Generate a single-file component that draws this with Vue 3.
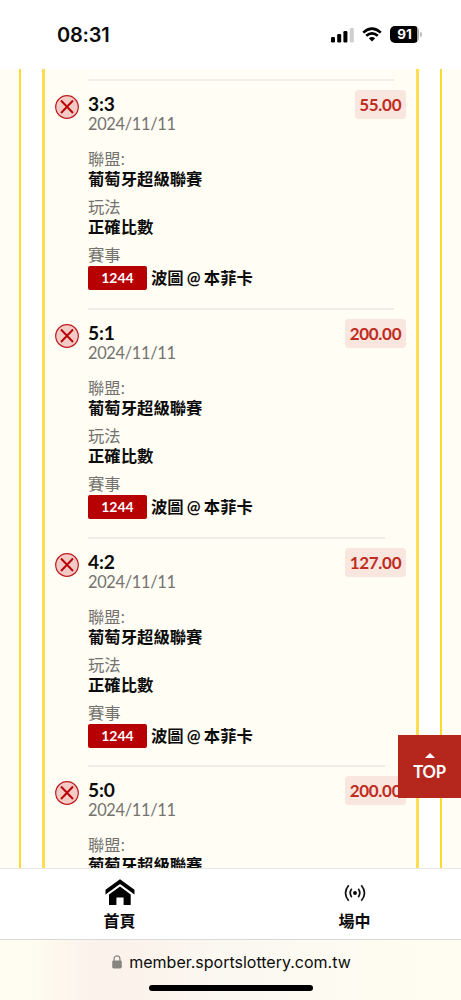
<script setup>
import { ref } from "vue"

const bets = ref([
  { score: "3:3", odds: "55.00" },
  { score: "5:1", odds: "200.00" },
  { score: "4:2", odds: "127.00", short: true },
  { score: "5:0", odds: "200.00", short: true }
])

const date = "2024/11/11"
const league = "葡萄牙超級聯賽"
const play = "正確比數"
const matchNo = "1244"
const match = "波圖 @ 本菲卡"

function toTop(){
  window.scrollTo(0, 0)
}
</script>


<template>

<div class="phone">

<header class="status">
<span class="clock">08:31</span>
<svg class="signal" viewBox="0 0 24 16">
<rect x="0" y="10" width="4" height="5.5" rx="1.2" />
<rect x="6.2" y="7" width="4" height="8.5" rx="1.2" />
<rect x="12.4" y="4" width="4" height="11.5" rx="1.2" />
<rect x="18.8" y="1" width="4" height="14.5" rx="1.2" fill="#cfcfcf" />
</svg>
<svg class="wifi" viewBox="0 0 20 15">
<path d="M1.2 5.6Q10-2.2 18.8 5.6" />
<path d="M4.2 8.8Q10 3.8 15.8 8.8" />
<path class="dot" d="M6.8 11.2Q10 8.6 13.2 11.2L10 14.4Z" />
</svg>
<span class="battery"><b>91</b></span>
<span class="battery-tip"></span>
</header>

<main class="page">
<div class="outer">
<div class="card">

<section v-for="(bet, i) in bets" :key="i" class="bet">
<div class="line" :class="{ short: bet.short }"></div>
<div class="row">
<svg class="lose" viewBox="0 0 24 24">
<circle cx="12" cy="12" r="11.3" />
<path d="M6 5.5L18 18M18 5.5L6 18" />
</svg>
<div class="info">
<div class="score">{{ bet.score }}</div>
<div class="date">{{ date }}</div>
<div class="label first">聯盟:</div>
<div class="value">{{ league }}</div>
<div class="label">玩法</div>
<div class="value">{{ play }}</div>
<div class="label">賽事</div>
<div class="match">
<span class="no">{{ matchNo }}</span>
<span class="teams">{{ match }}</span>
</div>
</div>
<div class="odds">{{ bet.odds }}</div>
</div>
</section>

</div>
</div>
</main>

<button class="top" @click="toTop">
<span class="arrow"></span>
TOP
</button>

<nav class="tabs">
<a class="tab">
<svg class="home" viewBox="0 0 30 27">
<path d="M15 .3L29.5 10.8V15.4L15 4.9L.5 15.4V10.8Z" />
<path d="M15 7.4L25.7 15.4V26H18.6V18.5H11.4V26H4V15.4Z" />
</svg>
<span>首頁</span>
</a>
<a class="tab">
<svg class="live" viewBox="0 0 22 18">
<circle cx="11" cy="9" r="1.9" />
<path d="M7.7 4.8Q4.7 9 7.7 13.2M14.3 4.8Q17.3 9 14.3 13.2M4.7 1.2Q-1.7 9 4.7 16.8M17.3 1.2Q23.7 9 17.3 16.8" />
</svg>
<span>場中</span>
</a>
</nav>

<footer class="browser">
<div class="address">
<svg class="lock" viewBox="0 0 10 14">
<rect x="0.2" y="5.6" width="9.6" height="7.9" rx="1.4" />
<path d="M2.1 6V3.7a2.9 2.9 0 0 1 5.8 0V6" />
</svg>
<span>member.sportslottery.com.tw</span>
</div>
<div class="bar"></div>
</footer>

</div>

</template>


<style>
body{
margin:0;
overflow:hidden;
}
</style>

<style scoped>

.phone{
position:relative;
width:461px;
height:1000px;
display:flex;
flex-direction:column;
overflow:hidden;
background:#fff;
font-family:Lato,"Noto Sans CJK TC",sans-serif;
color:#0c0c0c;
}

.status{
height:69px;
flex:none;
box-sizing:border-box;
padding-left:57px;
display:flex;
align-items:center;
font-family:Inter,sans-serif;
}

.clock{
width:274px;
font-size:20px;
font-weight:600;
letter-spacing:-0.2px;
}

.signal{
width:24px;
height:16px;
margin-right:7px;
}

.wifi{
width:20px;
height:15px;
margin-right:8px;
fill:none;
stroke:#000;
stroke-width:2.6;
}

.wifi .dot{
fill:#000;
stroke:none;
}

.battery{
width:29px;
height:17px;
border-radius:5px;
background:linear-gradient(90deg,#000 27px,#aaa 27px);
color:#fff;
font-size:13.5px;
line-height:17px;
text-align:center;
}

.battery-tip{
width:2px;
height:5px;
margin-left:1px;
border-radius:0 2px 2px 0;
background:#bbb;
}

.page{
height:799px;
flex:none;
overflow:hidden;
display:flex;
background:#fffdf4;
padding:0 19px;
}

.outer{
flex:1;
background:#fff;
border-left:2px solid #ffd92e;
border-right:2px solid #ffd92e;
padding:0 21px;
}

.card{
background:#fffdf4;
border-left:3px solid #ffdd50;
border-right:3px solid #ffdd50;
padding:10.4px 10px 0;
}

.bet{
height:228.7px;
}

.line{
height:2px;
width:306px;
margin-left:33px;
background:#f0ede8;
}

.line.short{
width:297px;
}

.row{
display:flex;
align-items:flex-start;
padding-top:13px;
}

.lose{
width:24px;
height:24px;
margin-top:1px;
margin-right:9px;
flex:none;
fill:#f3cbc6;
stroke:#bf1a1d;
stroke-width:1.2;
}

.lose path{
stroke:#b90508;
stroke-width:2;
}

.info{
flex:1;
font-size:16.35px;
line-height:20px;
}

.score{
font-size:19.2px;
font-weight:700;
letter-spacing:-0.2px;
}

.date,
.label{
color:#74736f;
}

.date{
letter-spacing:-0.3px;
}

.label{
margin-top:8px;
}

.label.first{
margin-top:15px;
}

.value,
.match{
font-weight:700;
}

.value{
white-space:nowrap;
}

.match{
display:flex;
align-items:center;
margin-top:1px;
height:24px;
white-space:nowrap;
}

.teams{
word-spacing:-0.8px;
}

.no{
width:59px;
height:24px;
margin-right:4px;
border-radius:2px;
background:#b70002;
color:#fff;
font-size:14px;
line-height:24px;
text-align:center;
}

.odds{
flex:none;
margin-top:-4px;
padding:0 4.8px 0 4.2px;
height:29px;
border-radius:4px;
background:#f8e6df;
color:#c02c22;
font-size:17px;
font-weight:700;
letter-spacing:-0.3px;
line-height:30px;
}

.top{
position:absolute;
right:0;
top:735px;
width:63px;
height:63px;
display:flex;
flex-direction:column;
align-items:center;
border:0;
padding:18px 0 0;
background:#b5261d;
color:#fff;
font-family:Lato,sans-serif;
font-size:16.6px;
font-weight:700;
letter-spacing:-0.3px;
line-height:20px;
}

.arrow{
border:5px solid transparent;
border-top:0;
border-bottom-color:#fff;
margin-bottom:4px;
}

.tabs{
height:72px;
flex:none;
box-sizing:border-box;
display:flex;
justify-content:space-between;
padding:0 66px 0 79px;
border-top:1.5px solid #e8e8e6;
border-bottom:1.5px solid #d9d9d6;
background:#fff;
}

.tab{
width:81px;
display:flex;
flex-direction:column;
align-items:center;
font-size:16px;
font-weight:700;
line-height:20px;
}

.home{
width:30px;
height:27px;
margin-top:10px;
margin-bottom:5px;
}

.live{
width:22px;
height:18px;
margin-top:15px;
margin-bottom:9px;
}

.live path{
fill:none;
stroke:#111;
stroke-width:1.7;
}

.browser{
flex:1;
display:flex;
flex-direction:column;
align-items:center;
background:linear-gradient(90deg,#fffdf1 25px,#fbf2eb 95px,#fbf2eb 130px,#fbf8f1 215px,#fbf8f1 250px,#fffdf1 420px);
font-family:Inter,sans-serif;
}

.address{
display:flex;
align-items:center;
margin-top:12px;
height:20px;
padding-left:2px;
font-size:16px;
}

.lock{
width:10px;
height:14px;
margin-right:7px;
fill:#87857f;
}

.lock path{
fill:none;
stroke:#87857f;
stroke-width:1.3;
}

.bar{
width:164px;
height:6px;
margin-top:13px;
border-radius:3px;
background:#000;
}

</style>
